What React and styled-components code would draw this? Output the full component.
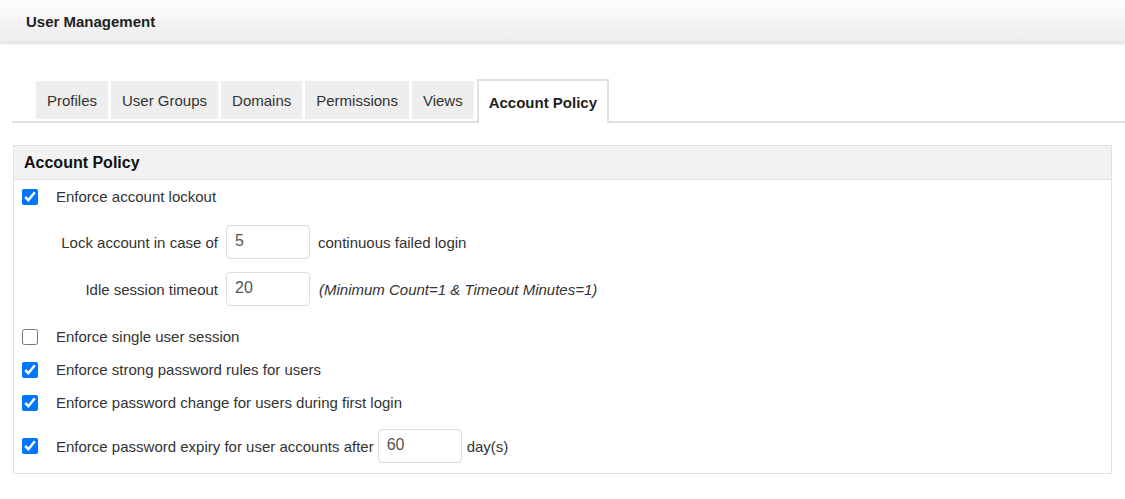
import React from "react";
import styled, { createGlobalStyle } from "styled-components";

const Global = createGlobalStyle`
  body {
    margin: 0;
    background: #ffffff;
    font-family: "Liberation Sans", Arial, sans-serif;
    color: #333333;
  }
`;

const Header = styled.header`
  height: 42px;
  display: flex;
  align-items: center;
  padding: 1px 0 0 26px;
  box-sizing: border-box;
  background: linear-gradient(#fdfdfd, #ececec);
  box-shadow: 0 2px 2px rgba(0, 0, 0, 0.12);
  font-size: 15px;
  font-weight: 700;
  color: #222222;
`;

const TabBar = styled.nav`
  display: flex;
  align-items: flex-end;
  gap: 3px;
  margin: 37px 0 0 12px;
  padding-left: 24px;
  border-bottom: 2px solid #e0e0e0;
`;

const Tab = styled.div`
  display: flex;
  align-items: center;
  box-sizing: border-box;
  height: ${p => (p.$active ? "44px" : "38px")};
  margin-bottom: ${p => (p.$active ? "-2px" : "2px")};
  padding: 0 ${p => (p.$active ? "10px" : "11px")};
  background: ${p => (p.$active ? "#ffffff" : "#eeeeee")};
  border: ${p => (p.$active ? "2px solid #e0e0e0" : "none")};
  border-bottom: none;
  font-size: 15px;
  font-weight: ${p => (p.$active ? 700 : 400)};
  color: ${p => (p.$active ? "#222222" : "#333333")};
`;

const Panel = styled.section`
  margin: 22px 13px 0 13px;
  border: 1px solid #e0e0e0;
`;

const PanelTitle = styled.h2`
  margin: 0;
  height: 33px;
  display: flex;
  align-items: center;
  padding-left: 10px;
  background: #f2f2f2;
  border-bottom: 1px solid #e0e0e0;
  font-size: 16px;
  font-weight: 700;
  color: #111111;
`;

const Body = styled.div`
  padding: 0 0 10px 8px;
`;

const CheckRow = styled.label`
  display: flex;
  align-items: center;
  min-height: ${p => (p.$tall ? "34px" : "33px")};
  margin-top: ${p => p.$top || "0"};
  gap: 18px;
  font-size: 15px;
`;

const Check = styled.input.attrs({ type: "checkbox" })`
  width: 16px;
  height: 16px;
  margin: 0;
  accent-color: #0075ff;
`;

const Fields = styled.div`
  display: grid;
  grid-template-columns: 196px 84px auto;
  column-gap: 8px;
  row-gap: 13px;
  align-items: center;
  margin: 12px 0 14px 0;
  font-size: 15px;
`;

const FieldLabel = styled.span`
  justify-self: end;
`;

const Field = styled.input`
  box-sizing: border-box;
  width: 84px;
  height: 34px;
  padding: 0 0 2px 8px;
  margin: ${p => p.$margin || "0"};
  border: 1px solid #dddddd;
  border-radius: 4px;
  font: 16px "Liberation Sans", Arial, sans-serif;
  color: #555555;
  outline: none;
`;

const Note = styled.span`
  font-style: italic;
  margin-left: 1px;
`;

const Inline = styled.span`
  display: flex;
  align-items: center;
`;

const tabs = ["Profiles", "User Groups", "Domains", "Permissions", "Views", "Account Policy"];

export default function App() {
  return (
    <>
      <Global />
      <Header>User Management</Header>
      <TabBar>
        {tabs.map(t => (
          <Tab key={t} $active={t === "Account Policy"}>{t}</Tab>
        ))}
      </TabBar>
      <Panel>
        <PanelTitle>Account Policy</PanelTitle>
        <Body>
          <CheckRow>
            <Check defaultChecked />
            Enforce account lockout
          </CheckRow>
          <Fields>
            <FieldLabel>Lock account in case of</FieldLabel>
            <Field defaultValue="5" />
            <span>continuous failed login</span>
            <FieldLabel>Idle session timeout</FieldLabel>
            <Field defaultValue="20" />
            <Note>(Minimum Count=1 &amp; Timeout Minutes=1)</Note>
          </Fields>
          <CheckRow>
            <Check />
            Enforce single user session
          </CheckRow>
          <CheckRow>
            <Check defaultChecked />
            Enforce strong password rules for users
          </CheckRow>
          <CheckRow>
            <Check defaultChecked />
            Enforce password change for users during first login
          </CheckRow>
          <CheckRow $tall $top="10px">
            <Check defaultChecked />
            <Inline>
              Enforce password expiry for user accounts after
              <Field defaultValue="60" $margin="0 5px 0 4px" />
              day(s)
            </Inline>
          </CheckRow>
        </Body>
      </Panel>
    </>
  );
}
